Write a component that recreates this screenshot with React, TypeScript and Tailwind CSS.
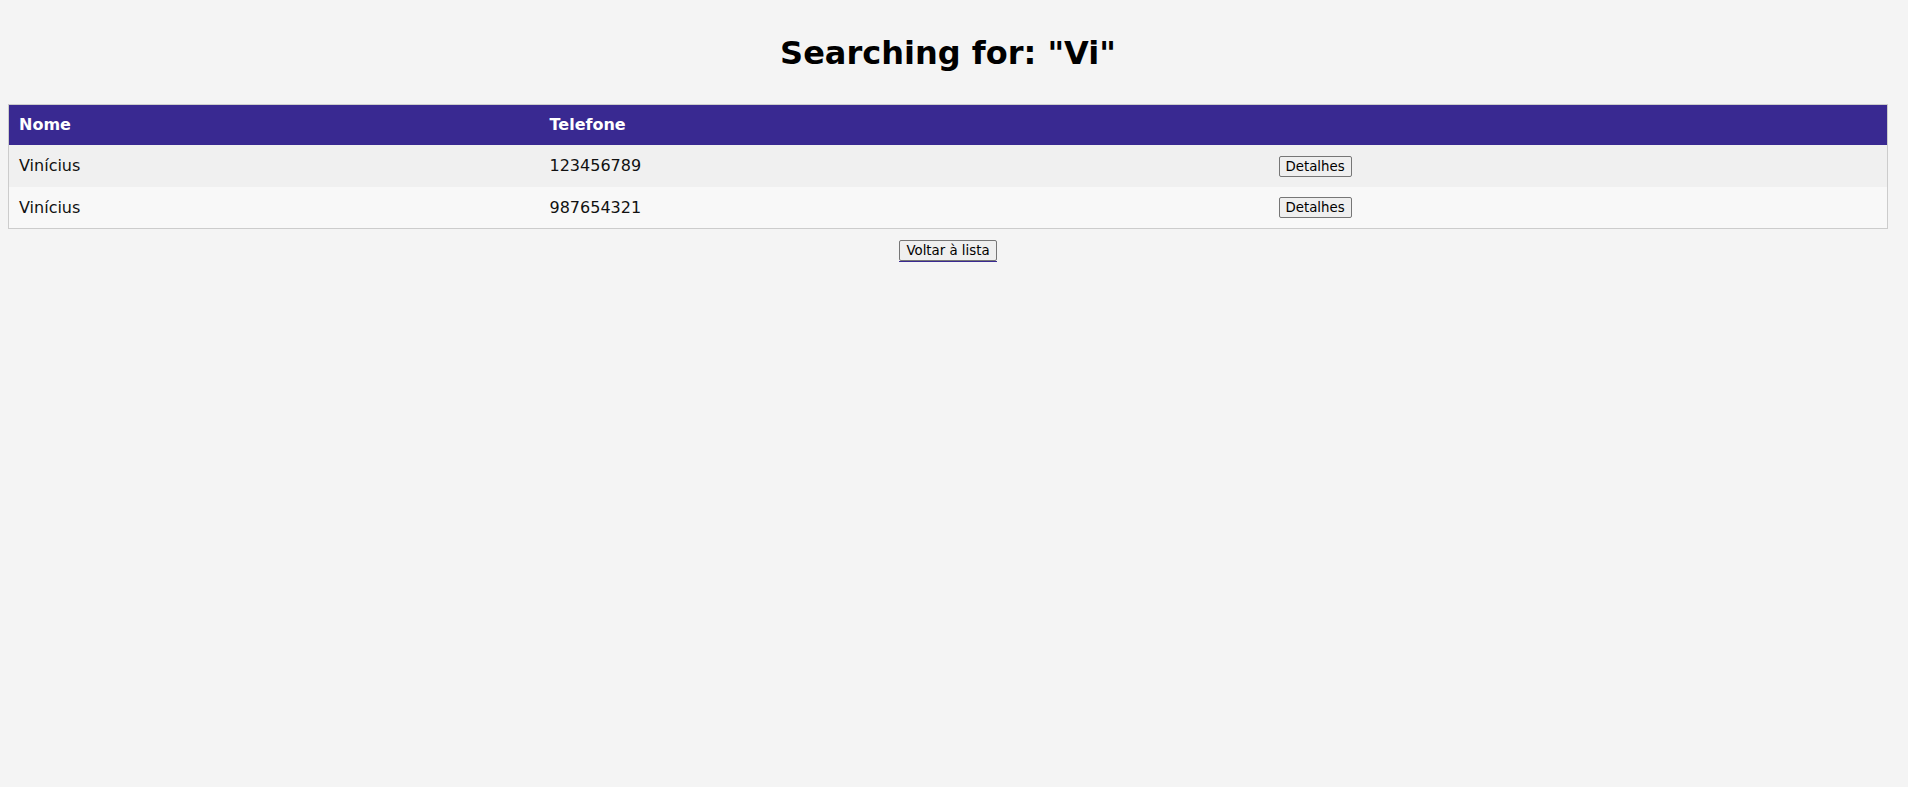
const results = [
  { id: 1, nome: 'Vinícius', telefone: '123456789' },
  { id: 2, nome: 'Vinícius', telefone: '987654321' },
]

const btn =
  'h-[21px] rounded-[2px] border border-[#767676] bg-[#efefef] px-[6px] text-[13.33px] leading-[17px] text-black'

export default function App() {
  return (
    <div className="min-h-[787px] w-full bg-[#f4f4f4] font-['DejaVu_Sans',Verdana,sans-serif] text-black">
      <div className="w-[1896px] px-2 pt-[35px]">
        <h1 className="h-[37px] text-center text-[32px] font-bold leading-[37px]">
          Searching for: "Vi"
        </h1>

        <table className="mt-[32px] w-[1880px] table-fixed border-collapse border border-[#cccccc] text-[16px]">
          <colgroup>
            <col className="w-[531px]" />
            <col className="w-[729px]" />
            <col />
          </colgroup>
          <thead>
            <tr className="h-[40px] bg-[#392991] text-left text-white">
              <th className="px-[10px] pt-[1px] font-bold">Nome</th>
              <th className="px-[10px] pt-[1px] font-bold">Telefone</th>
              <th className="px-[10px]"></th>
            </tr>
          </thead>
          <tbody>
            {results.map((r, i) => (
              <tr
                key={r.id}
                className={i % 2 === 0 ? 'h-[42px] bg-[#f0f0f0]' : 'h-[42px] bg-[#f8f8f8]'}
              >
                <td className="px-[10px] pt-[1px] text-[#111]">{r.nome}</td>
                <td className="px-[10px] pt-[1px] text-[#111]">{r.telefone}</td>
                <td className="px-[10px]">
                  <button className={btn}>Detalhes</button>
                </td>
              </tr>
            ))}
          </tbody>
        </table>

        <div className="mt-[11px] flex justify-center">
          <div className="border-b border-[#392991]">
            <button className={btn + ' block'}>Voltar à lista</button>
          </div>
        </div>
      </div>
    </div>
  )
}
